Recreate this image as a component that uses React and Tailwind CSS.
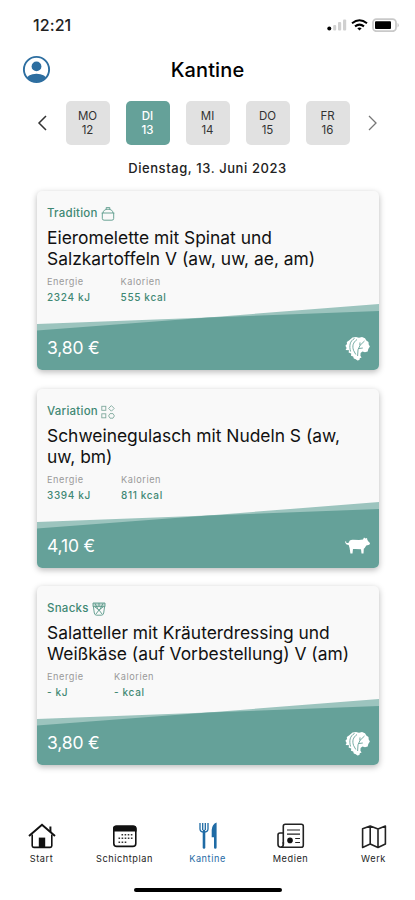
import React, { useState } from "react";

const days = [
    { name: "MO", date: 12 },
    { name: "DI", date: 13 },
    { name: "MI", date: 14 },
    { name: "DO", date: 15 },
    { name: "FR", date: 16 },
];

const BasketIcon = () => (
    <svg width="14" height="14" viewBox="0 0 14 14" fill="none" stroke="#5a9a8a" strokeWidth="0.9">
        <path d="M0.7 6h12.6M1.3 6v5.4q0 1.8 1.8 1.8h7.8q1.8 0 1.8-1.8V6" />
        <path d="M2 6C2.2 3.6 4 2.2 7 2.2s4.8 1.4 5 3.8M5.2 2.2V.6h3.6v1.6" />
    </svg>
);

const ShapesIcon = () => (
    <svg width="14" height="14" viewBox="0 0 14 14" fill="none" stroke="#7fa99d" strokeWidth="0.9">
        <rect x="0.8" y="1.3" width="4" height="4" />
        <path d="M10.4 0.6l2.8 2.8-2.8 2.8-2.8-2.8z" />
        <rect x="0.8" y="8.8" width="4" height="4" />
        <path d="M9 8.6h3l1.4 2.3-1.4 2.3H9l-1.4-2.3z" />
    </svg>
);

const SnackIcon = () => (
    <svg width="14" height="14" viewBox="0 0 14 14" fill="none" stroke="#5a9a8a" strokeWidth="0.9">
        <path d="M1 1h12v3.6H1z" fill="#4f928055" />
        <path d="M1.4 4.6l.9 6.4q.3 2.2 2.4 2.2h4.6q2.1 0 2.4-2.2l.9-6.4" />
        <path d="M3 1.4l3 6M7 1v3M11 1.4L8 7.4M3 5l4 3 4-3M4 12l3-4 3 4" />
    </svg>
);

const SaladIcon = () => (
    <svg width="25" height="25" viewBox="0 0 25 25">
        <path
            fill="#fff"
            d="M4 4.5L7.5 1.5 11 1l3 .8L17 1l3 1.2 1.3 2.4 2.2 1.4.2 2.6 1.2 2-1.6 2.4-.6 2.4-2.7.8-2.6-.6-1.8 1.4-.2 2.8 1.2 1.6-1.8.8-.4 1.8-2 .6-1.6-1.4-2-.6-.6-2-2.2-.8.2-2.2-2.6-1 .4-2.4L.6 14l1-2L.4 9.8 2 8l-.2-2z"
        />
        <path
            fill="none"
            stroke="#65a199"
            strokeWidth="0.9"
            d="M9.5 2.5C4.8 5 4 10 5.6 15.5M12 3.5C8 6.5 7 10 8.6 14.5l2.2 4M19.5 5L15 9.4l-2 4.4-.4 6.2M14.8 9.4l.2-3M13.4 12.6l4.4-.6"
        />
    </svg>
);

const PigIcon = () => (
    <svg width="25" height="17" viewBox="0 0 25 17">
        <path
            fill="#fff"
            d="M0 4.2l1.3.6.1 1.2L3.4 6 4.8 3.4Q6 2.6 8 2.7l6 .4 4-.7 1-2 1.5 1.2L22 1l.4 2 1.4 2 1.3 1-.8 1.8-3 .6-1.6 2.6-.9.8L18.5 16.4h-2l-.5-4.2-5.6-.3-2.4.2-.5 4.3H5.4L4.6 11 3.7 8 1.6 7.4.4 6z"
        />
    </svg>
);

const meals = [
    {
        category: "Tradition",
        icon: <BasketIcon />,
        title: ["Eieromelette mit Spinat und", "Salzkartoffeln V (aw, uw, ae, am)"],
        energy: "2324 kJ",
        calories: "555 kcal",
        price: "3,80 €",
        badge: <SaladIcon />,
    },
    {
        category: "Variation",
        icon: <ShapesIcon />,
        title: ["Schweinegulasch mit Nudeln S (aw,", "uw, bm)"],
        energy: "3394 kJ",
        calories: "811 kcal",
        price: "4,10 €",
        badge: <PigIcon />,
    },
    {
        category: "Snacks",
        icon: <SnackIcon />,
        title: ["Salatteller mit Kräuterdressing und", "Weißkäse (auf Vorbestellung) V (am)"],
        energy: "- kJ",
        calories: "- kcal",
        price: "3,80 €",
        badge: <SaladIcon />,
    },
];

const StatusBar = () => (
    <div className="flex h-[50px] items-center justify-between pl-[33px] pr-[16px]">
        <span className="text-[16px] font-medium leading-5 tracking-[0.1px] text-[#222]">12:21</span>
        <svg width="72" height="14" viewBox="0 0 72 14">
            <circle cx="2.3" cy="10.5" r="2" fill="#000" />
            <rect x="6.2" y="7" width="3" height="5.5" rx="1" fill="#d0d0d0" />
            <rect x="11" y="4" width="3.2" height="8.5" rx="1" fill="#d0d0d0" />
            <rect x="16" y="1.5" width="3.2" height="11" rx="1" fill="#d0d0d0" />
            <g fill="none" stroke="#000" strokeWidth="2">
                <path d="M25 5.2q7.5-6 15 0" />
                <path d="M28 8.4q4.5-3.6 9 0" />
            </g>
            <path d="M30.3 10.2q2.2-1.6 4.4 0l-2.2 2.3z" fill="#000" />
            <rect x="46" y="1.2" width="23" height="12" rx="3.4" fill="none" stroke="#c9c9c9" strokeWidth="1.8" />
            <rect x="48" y="3.3" width="16" height="7.8" rx="1" fill="#000" />
            <path d="M70.5 5v4.4q1.3-.6 1.3-2.2t-1.3-2.2z" fill="#c9c9c9" />
        </svg>
    </div>
);

const MealCard = ({ meal }) => (
    <div className="flex h-[179px] flex-col overflow-hidden rounded-[5px] bg-[#f9f9f9] shadow-[0_2px_6px_rgba(0,0,0,0.28)]">
        <div className="h-[113px] px-[10px] pt-[14px]">
            <div className="flex h-[18px] items-center gap-[3px]">
                <span className="text-[11.5px] font-medium tracking-[0.25px] text-[#3f8874]">{meal.category}</span>
                {meal.icon}
            </div>
            <h2 className="mt-[4px] whitespace-nowrap text-[17.4px] leading-[21px] text-[#111]">
                {meal.title[0]}
                <br />
                {meal.title[1]}
            </h2>
            <div className="mt-[5px] flex gap-[30px]">
                <div className="min-w-[37px]">
                    <p className="text-[9.2px] leading-[15px] tracking-[0.55px] text-[#999]">Energie</p>
                    <p className="text-[10px] font-medium leading-[16px] tracking-[0.65px] text-[#3f8874]">{meal.energy}</p>
                </div>
                <div>
                    <p className="text-[9.2px] leading-[15px] tracking-[0.55px] text-[#999]">Kalorien</p>
                    <p className="text-[10px] font-medium leading-[16px] tracking-[0.65px] text-[#3f8874]">{meal.calories}</p>
                </div>
            </div>
        </div>
        <svg className="block shrink-0" width="342" height="27" viewBox="0 0 342 27">
            <path d="M0 20L171 13.5 342 0v27H0z" fill="#9cc4be" />
            <path d="M0 26.5L171 13.5 342 7v20H0z" fill="#65a199" />
        </svg>
        <div className="flex flex-1 items-center justify-between bg-[#65a199] pl-[10px] pr-[9px]">
            <span className="pb-[4px] text-[17.5px] tracking-[-0.15px] text-white">{meal.price}</span>
            <span className="flex h-[25px] items-center pb-[5px]">{meal.badge}</span>
        </div>
    </div>
);

const navItems = [
    {
        label: "Start",
        icon: (
            <svg width="28" height="28" viewBox="0 0 28 28" fill="none" stroke="#111" strokeWidth="1.6">
                <path d="M1 14L14 2.8 27 14" strokeWidth="2" />
                <path d="M4.2 12.5v11.3q0 1.6 1.6 1.6h16.4q1.6 0 1.6-1.6V12.5" />
                <path d="M22.4 10V4.5" strokeWidth="2" />
                <rect x="10.8" y="15.6" width="6.4" height="9.8" fill="#111" stroke="none" />
            </svg>
        ),
    },
    {
        label: "Schichtplan",
        icon: (
            <svg width="28" height="28" viewBox="0 0 28 28">
                <rect x="2.8" y="4.2" width="22" height="20.2" rx="3" fill="none" stroke="#111" strokeWidth="1.6" />
                <path d="M2 9.6V6.5q0-3 3-3h17.6q3 0 3 3v3.1z" fill="#111" />
                <path d="M10.5 12.8h11M7.5 16.3h14M7.5 20.2h8" stroke="#333" strokeWidth="1.5" strokeDasharray="1.6 1.5" />
            </svg>
        ),
    },
    {
        label: "Kantine",
        active: true,
        icon: (
            <svg width="28" height="28" viewBox="0 0 28 28">
                <path d="M6 1v6q0 3 4 3t4-3V1M8.7 1v7M11.3 1v7" fill="none" stroke="#1f6ba5" strokeWidth="1.3" />
                <path d="M10 9v16.5" stroke="#1f6ba5" strokeWidth="2.6" strokeLinecap="round" />
                <path d="M22.6 .5v25q0 1.2-1.3 1.2T20 25.5V15.2h-2.3V8q.4-6 4.9-7.5z" fill="#1f6ba5" />
            </svg>
        ),
    },
    {
        label: "Medien",
        icon: (
            <svg width="28" height="28" viewBox="0 0 28 28" fill="none" stroke="#222" strokeWidth="1.6">
                <path d="M6.3 22.5V4.2q0-2 2-2h16q2 0 2 2v19q0 2-2 2H4q-3 0-3-3V13q0-2 2-2h3" />
                <path d="M6.3 20v2.5q0 2.5-2.3 2.7" />
                <path d="M10 8h13M10 12.2h13M18.2 16.5H23M18.2 20.5H23" strokeWidth="1.2" />
                <circle cx="13" cy="18.4" r="2.8" fill="#111" stroke="none" />
            </svg>
        ),
    },
    {
        label: "Werk",
        icon: (
            <svg width="28" height="28" viewBox="0 0 28 28" fill="none" stroke="#222" strokeWidth="1.6" strokeLinejoin="round">
                <path d="M2.6 6.8L10.2 4l7.8 3 7.4-3v18L18 25.5 10.2 22l-7.6 3.5zM10.2 4v18M18 7v18.5" />
            </svg>
        ),
    },
];

const App = () => {
    const [selected, setSelected] = useState(13);

    return (
        <div className="flex h-[900px] w-[415px] flex-col overflow-hidden bg-white font-['Inter','Liberation_Sans',sans-serif] text-black">
            <StatusBar />

            {/* header */}
            <header className="grid h-[38px] grid-cols-[60px_1fr_60px] items-center">
                <svg className="ml-[22px]" width="29" height="29" viewBox="0 0 29 29">
                    <clipPath id="avatar">
                        <circle cx="14.5" cy="14.5" r="12.4" />
                    </clipPath>
                    <circle cx="14.5" cy="14.5" r="12.6" fill="#fff" stroke="#2d6ea0" strokeWidth="1.9" />
                    <circle cx="14.5" cy="11.4" r="4.9" fill="#2d6ea0" />
                    <ellipse cx="14.5" cy="25" rx="10.5" ry="6.3" fill="#2d6ea0" clipPath="url(#avatar)" />
                </svg>
                <h1 className="pt-px text-center text-[20px] font-medium tracking-[0.1px]">Kantine</h1>
            </header>

            {/* day picker */}
            <div className="mt-[12px] flex h-[45px] items-center justify-between pl-[37px] pr-[37px]">
                <svg width="10" height="16" viewBox="0 0 10 16" fill="none" stroke="#333" strokeWidth="1.5">
                    <path d="M9 1L2 8l7 7" />
                </svg>
                <div className="flex gap-4">
                    {days.map((day) => (
                        <button
                            key={day.date}
                            onClick={() => setSelected(day.date)}
                            className={`flex h-11 w-11 flex-col items-center justify-center rounded-[5px] text-[11.5px] leading-[14px] ${
                                selected === day.date ? "bg-[#65a199] font-medium text-white" : "bg-[#e1e1e1] text-[#333]"
                            }`}
                        >
                            <span>{day.name}</span>
                            <span>{day.date}</span>
                        </button>
                    ))}
                </div>
                <svg width="10" height="16" viewBox="0 0 10 16" fill="none" stroke="#777" strokeWidth="1.3">
                    <path d="M1 1l7 7-7 7" />
                </svg>
            </div>
            <p className="mt-[14px] text-center text-[13px] font-medium leading-[18px] tracking-[0.58px] text-[#222]">
                Dienstag, 13. Juni 2023
            </p>

            {/* meals */}
            <main className="mt-[14px] flex flex-col gap-[18.5px] pl-[37px] pr-[36px]">
                {meals.map((meal) => (
                    <MealCard key={meal.category} meal={meal} />
                ))}
            </main>

            {/* bottom navigation */}
            <nav className="mt-auto flex h-[66px] justify-between">
                {navItems.map((item) => (
                    <a key={item.label} className="flex w-[83px] flex-col items-center">
                        {item.icon}
                        <span
                            className={`mt-[3px] text-[9.2px] leading-[12px] tracking-[0.55px] ${
                                item.active ? "text-[#1f6ba5]" : "text-[#222]"
                            }`}
                        >
                            {item.label}
                        </span>
                    </a>
                ))}
            </nav>
            <div className="mb-[8px] flex justify-center">
                <div className="h-[4px] w-[148px] rounded-full bg-black" />
            </div>
        </div>
    );
};

export default App;
